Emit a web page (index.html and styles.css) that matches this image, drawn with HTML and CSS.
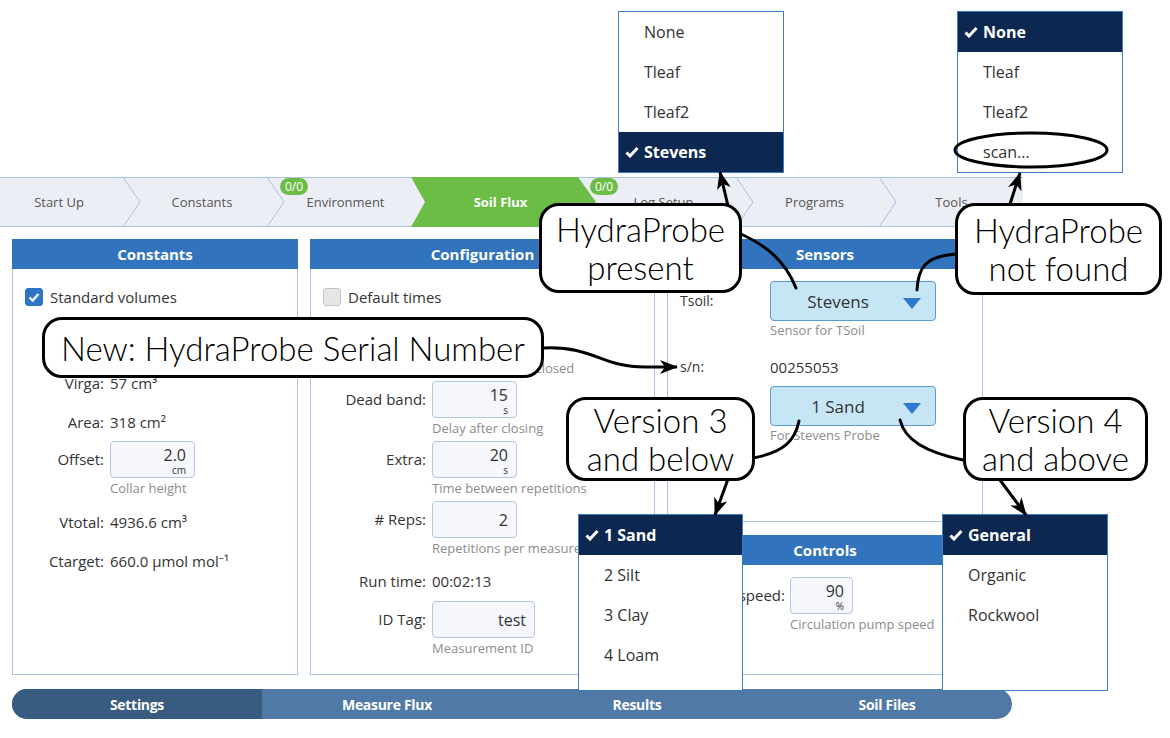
FILE: index.html
```html
<!DOCTYPE html>
<html lang="en">
<head>
<meta charset="utf-8">
<title>Soil Flux</title>
<link rel="stylesheet" href="styles.css">
</head>
<body>
<div class="screen">
  <div class="top-space"></div>

  <nav class="tabbar">
    <div class="tab t-start">Start Up<svg class="chev" viewBox="0 0 18 50"><polyline points="0,0 17,25 0,50"/></svg></div>
    <div class="tab t-const">Constants<svg class="chev" viewBox="0 0 18 50"><polyline points="0,0 17,25 0,50"/></svg></div>
    <div class="tab t-env"><span class="badge">0/0</span>Environment</div>
    <div class="tab t-soil active">Soil Flux</div>
    <div class="tab t-log"><span class="badge">0/0</span>Log Setup<svg class="chev" viewBox="0 0 18 50"><polyline points="0,0 17,25 0,50"/></svg></div>
    <div class="tab t-prog">Programs<svg class="chev" viewBox="0 0 18 50"><polyline points="0,0 17,25 0,50"/></svg></div>
    <div class="tab t-tools">Tools</div>
  </nav>

  <main class="panels">
    <section class="panel p-const">
      <h2 class="panel-head">Constants</h2>
      <label class="check-row"><span class="cbox on"><svg viewBox="0 0 18 18"><polyline points="4,9.5 7.5,13 14,5.5"/></svg></span>Standard volumes</label>
      <div class="frow r-first h40"><span class="lbl"></span><span class="val"></span></div>
      <div class="frow h40"><span class="lbl">Virga:</span><span class="val">57 cm³</span></div>
      <div class="frow h38"><span class="lbl">Area:</span><span class="val">318 cm²</span></div>
      <div class="frow inp"><span class="lbl">Offset:</span>
        <div class="fcell"><div class="field w85"><span class="fv">2.0</span><span class="fu">cm</span></div><div class="help">Collar height</div></div>
      </div>
      <div class="frow h41"><span class="lbl">Vtotal:</span><span class="val">4936.6 cm³</span></div>
      <div class="frow h38"><span class="lbl">Ctarget:</span><span class="val">660.0 µmol mol⁻¹</span></div>
    </section>

    <section class="panel p-conf">
      <h2 class="panel-head">Configuration</h2>
      <label class="check-row"><span class="cbox"></span>Default times</label>
      <div class="frow inp r-first2"><span class="lbl"></span>
        <div class="fcell"><div class="field w85 blank"></div><div class="help">Time chamber is closed</div></div>
      </div>
      <div class="frow inp"><span class="lbl">Dead band:</span>
        <div class="fcell"><div class="field w85"><span class="fv">15</span><span class="fu">s</span></div><div class="help">Delay after closing</div></div>
      </div>
      <div class="frow inp"><span class="lbl">Extra:</span>
        <div class="fcell"><div class="field w85"><span class="fv">20</span><span class="fu">s</span></div><div class="help">Time between repetitions</div></div>
      </div>
      <div class="frow inp"><span class="lbl"># Reps:</span>
        <div class="fcell"><div class="field w85 nounit"><span class="fv">2</span></div><div class="help">Repetitions per measurement</div></div>
      </div>
      <div class="frow h40"><span class="lbl">Run time:</span><span class="val">00:02:13</span></div>
      <div class="frow inp"><span class="lbl">ID Tag:</span>
        <div class="fcell"><div class="field w103 nounit"><span class="fv">test</span></div><div class="help">Measurement ID</div></div>
      </div>
    </section>

    <div class="col-right">
      <section class="panel p-sens">
        <h2 class="panel-head">Sensors</h2>
        <div class="srow s-tsoil"><span class="slbl">Tsoil:</span>
          <div class="fcell"><div class="select"><span class="sv">Stevens</span><svg class="tri" viewBox="0 0 18 11"><polygon points="0,0 18,0 9,11"/></svg></div><div class="help h18">Sensor for TSoil</div></div>
        </div>
        <div class="srow s-sn"><span class="slbl">s/n:</span><span class="sval">00255053</span></div>
        <div class="srow s-sand"><span class="slbl"></span>
          <div class="fcell"><div class="select"><span class="sv">1 Sand</span><svg class="tri" viewBox="0 0 18 11"><polygon points="0,0 18,0 9,11"/></svg></div><div class="help h18">For Stevens Probe</div></div>
        </div>
      </section>
      <section class="panel p-ctrl">
        <h2 class="panel-head">Controls</h2>
        <div class="frow inp r-ctrl"><span class="lbl">Pump speed:</span>
          <div class="fcell"><div class="field w63"><span class="fv">90</span><span class="fu">%</span></div><div class="help">Circulation pump speed</div></div>
        </div>
      </section>
    </div>
  </main>

  <nav class="navbar">
    <div class="nav-item cur">Settings</div>
    <div class="nav-item">Measure Flux</div>
    <div class="nav-item">Results</div>
    <div class="nav-item">Soil Files</div>
  </nav>

  <!-- dropdown menus shown over the UI -->
  <ul class="dd dd-top1">
    <li class="dd-item">None</li>
    <li class="dd-item">Tleaf</li>
    <li class="dd-item">Tleaf2</li>
    <li class="dd-item sel"><svg class="ck" viewBox="0 0 14 12"><polyline points="1.5,6.5 5,10 12.5,2"/></svg>Stevens</li>
  </ul>
  <ul class="dd dd-top2">
    <li class="dd-item sel"><svg class="ck" viewBox="0 0 14 12"><polyline points="1.5,6.5 5,10 12.5,2"/></svg>None</li>
    <li class="dd-item">Tleaf</li>
    <li class="dd-item">Tleaf2</li>
    <li class="dd-item">scan...</li>
  </ul>
  <ul class="dd dd-sand">
    <li class="dd-item sel"><svg class="ck" viewBox="0 0 14 12"><polyline points="1.5,6.5 5,10 12.5,2"/></svg>1 Sand</li>
    <li class="dd-item">2 Silt</li>
    <li class="dd-item">3 Clay</li>
    <li class="dd-item">4 Loam</li>
  </ul>
  <ul class="dd dd-gen">
    <li class="dd-item sel"><svg class="ck" viewBox="0 0 14 12"><polyline points="1.5,6.5 5,10 12.5,2"/></svg>General</li>
    <li class="dd-item">Organic</li>
    <li class="dd-item">Rockwool</li>
  </ul>

  <!-- annotation connectors -->
  <svg class="annot" viewBox="0 0 1170 738" width="1170" height="738">
    <defs>
      <marker id="ah" viewBox="0 0 18 14" markerWidth="18" markerHeight="14" refX="17" refY="7" orient="auto" markerUnits="userSpaceOnUse">
        <path d="M0,0 L18,7 L0,14 L5,7 Z" fill="#000"/>
      </marker>
    </defs>
    <g fill="none" stroke="#000" stroke-width="3">
      <ellipse cx="1031" cy="150" rx="76" ry="17"/>
      <path d="M544,348 C595,346 600,367 645,367 L677,367" marker-end="url(#ah)"/>
      <path d="M728,206 L720,172" marker-end="url(#ah)"/>
      <path d="M741,234 C765,245 785,260 796,288" stroke-linecap="round"/>
      <path d="M1010,204 L1020,173" marker-end="url(#ah)"/>
      <path d="M957,254 C925,256 918,268 917,290" stroke-linecap="round"/>
      <path d="M753,458 C785,452 795,440 799,421" stroke-linecap="round"/>
      <path d="M728,479 L715,515" marker-end="url(#ah)"/>
      <path d="M963,460 C925,452 905,440 900,420" stroke-linecap="round"/>
      <path d="M1000,480 L1026,515" marker-end="url(#ah)"/>
    </g>
  </svg>

  <div class="callout c-serial">New: HydraProbe Serial Number</div>
  <div class="callout c-present">HydraProbe<br>present</div>
  <div class="callout c-notfound">HydraProbe<br>not found</div>
  <div class="callout c-v3">Version 3<br>and below</div>
  <div class="callout c-v4">Version 4<br>and above</div>
</div>
</body>
</html>
```

FILE: styles.css
```css
* { box-sizing: border-box; margin: 0; padding: 0; }
html, body { width: 1170px; height: 738px; overflow: hidden; background: #fff; }
body { font-family: "Open Sans", "Noto Sans", sans-serif; color: #333; }
ul { list-style: none; }

.screen { position: relative; width: 1170px; height: 738px; }
.top-space { height: 177px; }

/* ---------- chevron tab bar ---------- */
.tabbar {
  display: flex;
  width: 1023px;
  height: 50px;
  background: #eceef6;
  border-top: 1px solid #a9c3e3;
  border-bottom: 1px solid #a9c3e3;
}
.tab {
  position: relative;
  display: flex;
  align-items: center;
  justify-content: center;
  padding-left: 12px;
  font-size: 13px;
  color: #555;
  flex: none;
}
.t-start { width: 124px; padding-left: 0; padding-right: 6px; }
.t-const { width: 144px; }
.t-env { width: 143px; }
.t-soil { width: 167px; }
.t-log { width: 159px; }
.t-prog { width: 143px; }
.t-tools { width: 143px; padding-left: 0; }

.chev {
  position: absolute;
  right: -17px;
  top: -1px;
  width: 18px;
  height: 50px;
  fill: none;
  stroke: #a9c3e3;
  stroke-width: 1;
  z-index: 1;
}
.tab.active { color: #fff; font-weight: 700; z-index: 2; }
.tab.active::before {
  content: "";
  position: absolute;
  left: 0;
  top: -1px;
  bottom: -1px;
  width: calc(100% + 18px);
  background: #6cbd45;
  clip-path: polygon(0 0, calc(100% - 18px) 0, 100% 50%, calc(100% - 18px) 100%, 0 100%, 14px 50%);
  z-index: -1;
}
.badge {
  position: absolute;
  top: 0;
  left: 12px;
  height: 17px;
  padding: 0 5px;
  border-radius: 9px;
  background: #6cbd45;
  color: #fff;
  font-size: 12px;
  line-height: 17px;
  font-weight: 400;
  z-index: 3;
}

/* ---------- panels ---------- */
.panels {
  display: flex;
  gap: 12px;
  padding-left: 12px;
  margin-top: 12px;
  height: 436px;
}
.panel { border: 1px solid #a9c1e2; background: #fff; }
.p-const { width: 286px; }
.p-conf { width: 345px; }
.col-right { width: 316px; display: flex; flex-direction: column; gap: 13px; }
.p-sens { height: 283px; }
.p-ctrl { height: 140px; }

.panel-head {
  height: 30px;
  margin: -1px -1px 0;
  background: #3174bd;
  color: #fff;
  font-size: 15px;
  font-weight: 700;
  line-height: 30px;
  text-align: center;
}

.check-row {
  display: flex;
  align-items: center;
  gap: 7px;
  height: 18px;
  margin: 19px 0 0 12px;
  font-size: 15px;
  color: #333;
}
.cbox {
  width: 18px;
  height: 18px;
  border-radius: 3px;
  background: #e6e6e6;
  border: 1px solid #c4c4c4;
  flex: none;
}
.cbox.on { background: #2f75c7; border-color: #2f75c7; }
.cbox svg { width: 16px; height: 16px; fill: none; stroke: #fff; stroke-width: 2.6; }

.frow {
  display: grid;
  grid-template-columns: var(--lw, 91px) 1fr;
  column-gap: 6px;
  align-items: center;
  font-size: 15px;
}
.p-const .frow { --lw: 91px; }
.p-conf .frow { --lw: 115px; }
.p-ctrl .frow { --lw: 117px; column-gap: 5px; }
.lbl { text-align: right; color: #333; white-space: nowrap; }
.val { color: #333; white-space: nowrap; }
.h40 { height: 40px; }
.h38 { height: 38px; }
.h41 { height: 41px; }
.r-first { margin-top: 17px; }
.r-first2 { margin-top: 15px; }
.r-ctrl { margin-top: 12px; }

.frow.inp { align-items: start; margin-bottom: 3px; }
.frow.inp .lbl { line-height: 37px; min-height: 37px; }
.fcell { display: flex; flex-direction: column; align-items: flex-start; }
.field {
  height: 37px;
  background: #f5f7fd;
  border: 1px solid #b5c7e6;
  border-radius: 4px;
  display: flex;
  flex-direction: column;
  align-items: flex-end;
  padding: 3px 8px 0;
}
.w85 { width: 85px; }
.w103 { width: 103px; }
.w63 { width: 63px; }
.fv { font-size: 16px; line-height: 20px; color: #333; }
.fu { font-size: 10px; line-height: 10px; color: #333; }
.field.nounit { justify-content: center; padding-top: 0; }
.help {
  font-size: 13px;
  line-height: 20px;
  color: #8c8c8c;
  white-space: nowrap;
}
.help.h18 { line-height: 18px; }

/* sensors */
.srow {
  display: grid;
  grid-template-columns: 90px 1fr;
  padding-left: 12px;
  font-size: 14px;
}
.srow .slbl { color: #333; }
.s-tsoil { margin-top: 12px; align-items: start; }
.s-tsoil .slbl { line-height: 40px; }
.s-sn { margin-top: 18px; line-height: 20px; }
.s-sn .sval { font-size: 15px; color: #333; }
.s-sand { margin-top: 9px; }
.select {
  width: 166px;
  height: 40px;
  background: #c6e6f6;
  border: 1px solid #5a9ad6;
  border-radius: 4px;
  display: flex;
  align-items: center;
  padding-right: 30px;
  position: relative;
}
.sv { flex: 1; text-align: center; font-size: 17px; color: #333; }
.tri { position: absolute; right: 14px; top: 16px; width: 18px; height: 11px; fill: #2f78cf; }

/* ---------- bottom nav ---------- */
.navbar {
  display: flex;
  width: 1000px;
  height: 30px;
  margin: 14px 0 0 12px;
  border-radius: 15px;
  overflow: hidden;
  background: #5079a6;
}
.nav-item {
  flex: 1;
  display: flex;
  align-items: center;
  justify-content: center;
  color: #fff;
  font-size: 14px;
  font-weight: 700;
  letter-spacing: -0.3px;
}
.nav-item.cur { background: #385b80; }

/* ---------- dropdown overlays ---------- */
.dd {
  position: absolute;
  background: #fff;
  border: 1px solid #3a7cc6;
  z-index: 5;
}
.dd-top1 { left: 618px; top: 11px; width: 166px; }
.dd-top2 { left: 957px; top: 11px; width: 166px; }
.dd-sand { left: 578px; top: 514px; width: 165px; height: 177px; }
.dd-gen { left: 942px; top: 514px; width: 166px; height: 177px; }
.dd-item {
  position: relative;
  height: 40px;
  display: flex;
  align-items: center;
  padding-left: 25px;
  font-size: 16px;
  color: #333;
}
.dd-item.sel { background: #0c2850; color: #fff; font-weight: 700; }
.ck {
  position: absolute;
  left: 6px;
  top: 14px;
  width: 14px;
  height: 12px;
  fill: none;
  stroke: #fff;
  stroke-width: 3;
}

/* ---------- annotations ---------- */
.annot {
  position: absolute;
  left: 0;
  top: 0;
  z-index: 6;
  pointer-events: none;
}
.callout {
  position: absolute;
  z-index: 7;
  display: flex;
  align-items: center;
  justify-content: center;
  text-align: center;
  background: #fff;
  border: 3px solid #000;
  border-radius: 20px;
  font-family: "Lato", "DejaVu Sans", sans-serif;
  font-weight: 300;
  font-size: 33px;
  line-height: 38px;
  color: #000;
}
.c-serial { left: 42px; top: 317px; width: 502px; height: 61px; }
.c-present { left: 539px; top: 203px; width: 203px; height: 90px; }
.c-notfound { left: 955px; top: 203px; width: 207px; height: 92px; }
.c-v3 { left: 566px; top: 397px; width: 189px; height: 84px; }
.c-v4 { left: 963px; top: 397px; width: 185px; height: 84px; }
```
